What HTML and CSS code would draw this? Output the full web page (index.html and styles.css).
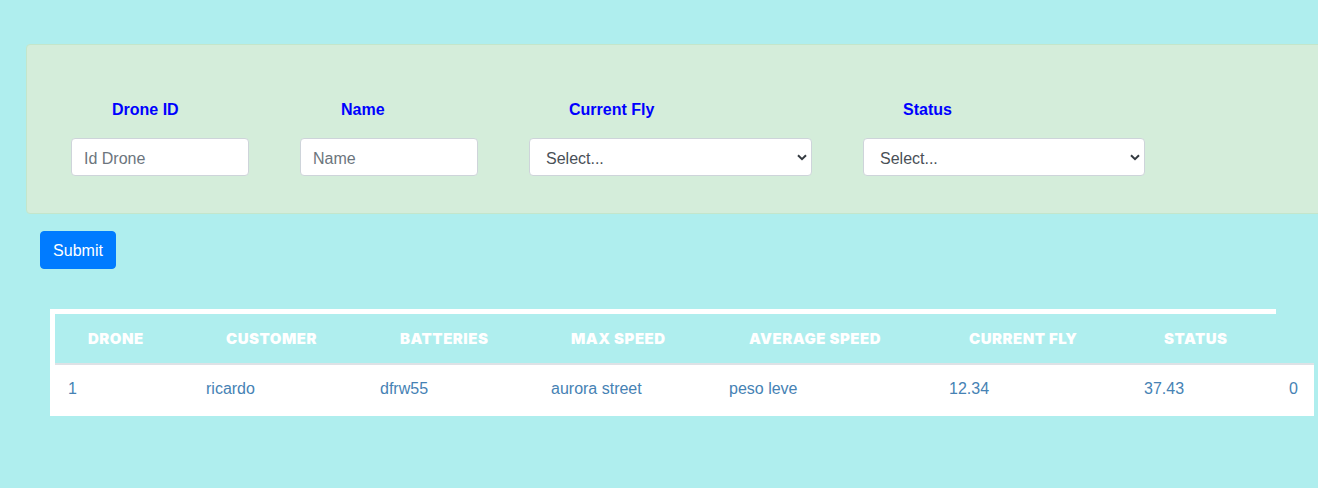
FILE: index.html
```html
<!DOCTYPE html>
<html>
<head>
<meta charset="utf-8">
<title>Drones</title>
<link rel="stylesheet" href="styles.css">
</head>
<body>
<form class="filter">
  <div class="field f-id">
    <label class="lbl">Drone ID</label>
    <input class="ctl" type="text" placeholder="Id Drone">
  </div>
  <div class="field f-name">
    <label class="lbl">Name</label>
    <input class="ctl" type="text" placeholder="Name">
  </div>
  <div class="field f-fly">
    <label class="lbl">Current Fly</label>
    <div class="sel-wrap">
      <select class="ctl sel"><option>Select...</option></select>
      <svg class="chev" width="10" height="7" viewBox="0 0 10 7"><path d="M1 1.2 L5 5.2 L9 1.2" fill="none" stroke="#343a40" stroke-width="2"/></svg>
    </div>
  </div>
  <div class="field f-status">
    <label class="lbl">Status</label>
    <div class="sel-wrap">
      <select class="ctl sel"><option>Select...</option></select>
      <svg class="chev" width="10" height="7" viewBox="0 0 10 7"><path d="M1 1.2 L5 5.2 L9 1.2" fill="none" stroke="#343a40" stroke-width="2"/></svg>
    </div>
  </div>
</form>
<button class="btn" type="button">Submit</button>
<div class="tbl-box">
  <table class="tbl">
    <colgroup>
      <col class="c1"><col class="c2"><col class="c3"><col class="c4"><col class="c5"><col class="c6"><col class="c7"><col class="c8">
    </colgroup>
    <thead>
      <tr><th>Drone</th><th>Customer</th><th>Batteries</th><th>Max Speed</th><th>Average Speed</th><th>Current Fly</th><th>Status</th><th></th></tr>
    </thead>
    <tbody>
      <tr><td>1</td><td>ricardo</td><td>dfrw55</td><td>aurora street</td><td>peso leve</td><td>12.34</td><td>37.43</td><td>0</td></tr>
    </tbody>
  </table>
</div>
</body>
</html>
```
FILE: styles.css
```css
html { overflow-x: hidden; }
body {
  margin: 0;
  background: #afeeee;
  font-family: "Liberation Sans", Arial, sans-serif;
  font-size: 16px;
  line-height: 24px;
  min-height: 488px;
}
.filter {
  margin: 44px -20px 0 26px;
  background: #d4edda;
  border: 1px solid #c3e6cb;
  border-radius: 4px;
  padding: 53px 0 37px 44px;
  display: flex;
  gap: 51px;
}
.field { display: flex; flex-direction: column; }
.f-id, .f-name { width: 178px; }
.f-fly { width: 283px; }
.f-status { width: 282px; }
.lbl {
  color: #0000ff;
  font-weight: bold;
  padding-left: 41px;
  margin-bottom: 16px;
}
.f-fly .lbl, .f-status .lbl { padding-left: 40px; }
.ctl {
  box-sizing: border-box;
  width: 100%;
  height: 38px;
  border: 1px solid #ced4da;
  border-radius: 4px;
  background: #fff;
  font: inherit;
  color: #495057;
  padding: 3px 12px 0;
  outline: none;
}
.ctl::placeholder { color: #6c757d; }
.sel-wrap { position: relative; }
.sel {
  appearance: none;
  -webkit-appearance: none;
  padding-left: 16px;
}
.chev {
  position: absolute;
  right: 5px;
  top: 16px;
  pointer-events: none;
}
.btn {
  display: block;
  margin: 17px 0 0 40px;
  width: 76px;
  height: 38px;
  background: #007bff;
  border: 1px solid #007bff;
  border-radius: 4px;
  color: #fff;
  font: inherit;
  padding: 2px 0 0;
}
.tbl-box {
  margin: 40px 0 0 50px;
  width: 1221px;
  border-top: 5px solid #fff;
  border-left: 5px solid #fff;
}
.tbl {
  border-collapse: collapse;
  table-layout: fixed;
  width: 1259px;
}
.c1 { width: 138px; }
.c2 { width: 174px; }
.c3 { width: 171px; }
.c4 { width: 178px; }
.c5 { width: 220px; }
.c6 { width: 195px; }
.c7 { width: 145px; }
.c8 { width: 38px; }
.tbl th {
  height: 50px;
  box-sizing: border-box;
  padding: 0 0 0 33px;
  text-align: left;
  color: #fff;
  font-family: "Inter", "Lato", sans-serif;
  font-weight: 900;
  font-size: 15px;
  letter-spacing: 0.5px;
  text-transform: uppercase;
  border-bottom: 2px solid #dee2e6;
  white-space: nowrap;
  vertical-align: middle;
}
.tbl td {
  background: #fff;
  height: 52px;
  box-sizing: border-box;
  padding: 0 0 3px 13px;
  color: #4682b4;
  vertical-align: middle;
  white-space: nowrap;
}
```
